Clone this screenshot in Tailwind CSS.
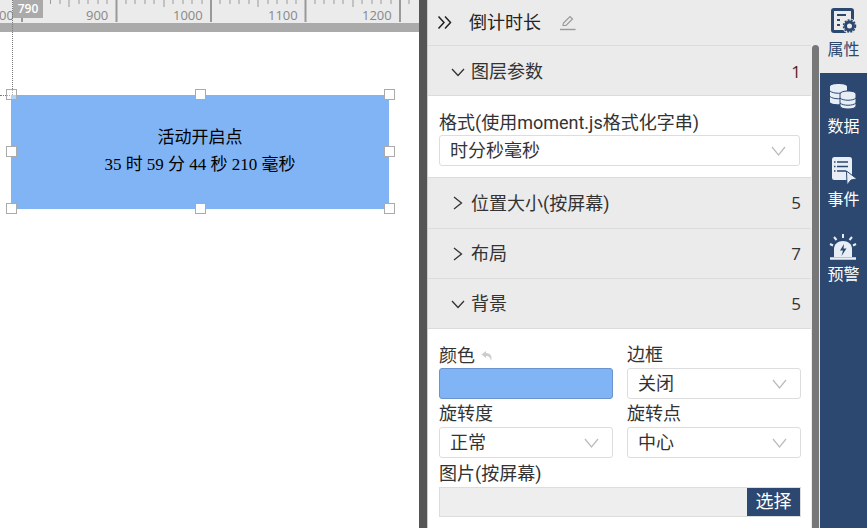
<!DOCTYPE html>
<html lang="zh"><head><meta charset="utf-8">
<script src="https://cdn.jsdelivr.net/npm/@tailwindcss/browser@4"></script>
</head>
<body class="m-0 overflow-hidden">
<div class="flex w-[867px] h-[528px] overflow-hidden bg-white text-[#333] font-['Roboto','Noto_Sans_CJK_SC',sans-serif]">
  <!-- canvas -->
  <div class="relative w-[419px] h-full bg-white shrink-0 overflow-hidden font-['Open_Sans','Noto_Sans_CJK_SC',sans-serif]">
    <div class="relative h-[23px] bg-[#ebebeb] overflow-hidden">
      <svg class="absolute left-0 top-0" width="419" height="23" stroke="#999" stroke-width="1">
        <g stroke-width="2"><path d="M22 0V22M116.500 0V22M211 0V22M305.500 0V22M400 0V22"/></g>
        <path d="M31.500 0V4M41 0V4M50.500 0V4M60 0V4M69 0V7M79 0V4M88 0V4M98 0V4M107 0V4M126 0V4M135 0V4M145 0V4M154 0V4M164 0V7M173 0V4M183 0V4M192 0V4M202 0V4M220 0V4M230 0V4M239 0V4M249 0V4M258 0V7M268 0V4M277 0V4M287 0V4M296 0V4M315 0V4M324 0V4M334 0V4M343 0V4M353 0V7M362 0V4M372 0V4M381 0V4M391 0V4M409 0V4"/>
      </svg>
      <span class="absolute right-[405px] top-[7px] text-[13px] leading-[16px] text-[#888]">800</span>
      <span class="absolute left-[86px] top-[7px] text-[13px] leading-[16px] text-[#888]">900</span>
      <span class="absolute left-[173px] top-[7px] text-[13px] leading-[16px] text-[#888]">1000</span>
      <span class="absolute left-[268px] top-[7px] text-[13px] leading-[16px] text-[#888]">1100</span>
      <span class="absolute left-[362px] top-[7px] text-[13px] leading-[16px] text-[#888]">1200</span>
      <span class="absolute left-[13px] top-0 w-[30px] h-[18px] bg-[#aaa] text-white text-[12px] leading-[17px] text-center font-semibold">790</span>
    </div>
    <div class="h-[9px] bg-[#aaa]"></div>
    <!-- guides -->
    <div class="absolute left-[12px] top-0 h-[95px] border-l border-dotted border-[#777]"></div>
    <div class="absolute left-0 top-[95px] w-[10px] border-t border-dotted border-[#777]"></div>
    <!-- widget -->
    <div class="absolute left-[11px] top-[95px] w-[378px] h-[114px] bg-[#80b4f5] flex flex-col items-center justify-center pb-[2px] text-black text-[17px] leading-[27px] font-['Liberation_Serif','Noto_Sans_CJK_SC',serif]">
      <div>活动开启点</div>
      <div>35 时 59 分 44 秒 210 毫秒</div>
    </div>
    <div class="absolute left-[6px] top-[89px] w-[11px] h-[11px] bg-white/40 border border-[#aaa]"></div>
    <div class="absolute left-[195px] top-[89px] w-[11px] h-[11px] bg-white border border-[#aaa]"></div>
    <div class="absolute left-[384px] top-[89px] w-[11px] h-[11px] bg-white border border-[#aaa]"></div>
    <div class="absolute left-[6px] top-[146px] w-[11px] h-[11px] bg-white border border-[#aaa]"></div>
    <div class="absolute left-[384px] top-[146px] w-[11px] h-[11px] bg-white border border-[#aaa]"></div>
    <div class="absolute left-[6px] top-[203px] w-[11px] h-[11px] bg-white border border-[#aaa]"></div>
    <div class="absolute left-[195px] top-[203px] w-[11px] h-[11px] bg-white border border-[#aaa]"></div>
    <div class="absolute left-[384px] top-[203px] w-[11px] h-[11px] bg-white border border-[#aaa]"></div>
  </div>
  <div class="w-[8px] h-full bg-[#555] shrink-0"></div>
  <!-- panel -->
  <div class="w-[393px] h-full shrink-0 bg-[#ebebeb] flex flex-col border-l border-[#ccc]">
    <div class="h-[45px] flex items-center shrink-0">
      <svg class="ml-[9px]" width="15" height="15" viewBox="0 0 15 15" fill="none" stroke="#222" stroke-width="1.500"><path d="M1.500 1.500L7 7.500L1.500 13.500M8 1.500L13.500 7.500L8 13.500"/></svg>
      <span class="ml-[17px] text-[18px] leading-[24px] text-[#222]">倒计时长</span>
      <svg class="ml-[18px]" width="17" height="17" viewBox="0 0 17 17" fill="none" stroke="#999" stroke-width="1.200"><path d="M4 11.500L4.500 9L11 2.500L13.500 5L7 11.500Z"/><path d="M1 15.500H16.500" stroke-width="1.400"/></svg>
    </div>
    <div class="flex flex-1 min-h-0">
      <div class="w-[383px] flex flex-col shrink-0">
        <div class="h-[51px] flex items-center border-y border-[#dcdcdc] pl-[23px] pr-[10px] pt-[2px] shrink-0">
          <svg width="14" height="14" viewBox="0 0 14 14" fill="none" stroke="#333" stroke-width="1.300"><path d="M1 4L7 10.500L13 4"/></svg>
          <span class="ml-[6px] text-[18px] text-[#333]">图层参数</span>
          <span class="ml-auto font-['Open_Sans'] text-[17px] text-[#5a2020]">1</span>
        </div>
        <div class="h-[82px] bg-white border-b border-[#dcdcdc] px-[11px] pt-[15px] shrink-0">
          <div class="text-[18px] leading-[24px] text-[#333] whitespace-nowrap">格式(使用moment.js格式化字串)</div>
          <div class="h-[31px] border border-[#ddd] rounded-[3px] flex items-center pl-[10px] pr-[13px] text-[18px] text-[#333]">
            <span>时分秒毫秒</span>
            <svg class="ml-auto" width="15" height="10" viewBox="0 0 15 10" fill="none" stroke="#bbb" stroke-width="1.200"><path d="M1 1L7.500 9L14 1"/></svg>
          </div>
        </div>
        <div class="h-[51px] flex items-center border-b border-[#dcdcdc] pl-[24px] pr-[10px] shrink-0">
          <svg width="12" height="14" viewBox="0 0 12 14" fill="none" stroke="#333" stroke-width="1.300"><path d="M2 1L9.500 7L2 13"/></svg>
          <span class="ml-[7px] text-[18px] text-[#333]">位置大小(按屏幕)</span>
          <span class="ml-auto font-['Open_Sans'] text-[17px] text-[#333]">5</span>
        </div>
        <div class="h-[50px] flex items-center border-b border-[#dcdcdc] pl-[24px] pr-[10px] shrink-0">
          <svg width="12" height="14" viewBox="0 0 12 14" fill="none" stroke="#333" stroke-width="1.300"><path d="M2 1L9.500 7L2 13"/></svg>
          <span class="ml-[7px] text-[18px] text-[#333]">布局</span>
          <span class="ml-auto font-['Open_Sans'] text-[17px] text-[#333]">7</span>
        </div>
        <div class="h-[50px] flex items-center border-b border-[#dcdcdc] pl-[23px] pr-[10px] shrink-0">
          <svg width="14" height="14" viewBox="0 0 14 14" fill="none" stroke="#333" stroke-width="1.300"><path d="M1 4L7 10.500L13 4"/></svg>
          <span class="ml-[6px] text-[18px] text-[#333]">背景</span>
          <span class="ml-auto font-['Open_Sans'] text-[17px] text-[#333]">5</span>
        </div>
        <div class="flex-1 bg-white px-[11px] pt-[14px]">
          <div class="grid grid-cols-[174px_174px] gap-x-[14px]">
            <div>
              <div class="h-[25px] leading-[24px] text-[18px] flex items-center">颜色
                <svg class="ml-[6px]" width="12" height="12" viewBox="0 0 12 12" fill="#ccc"><path d="M5 1L0.500 4.500L5 8V6C8 6 9.500 7.500 10 11C11.500 7 10 3 5 3Z"/></svg>
              </div>
              <div class="h-[31px] bg-[#80b4f5] border border-[#6a94cc] rounded-[3px]"></div>
            </div>
            <div>
              <div class="h-[25px] leading-[24px] text-[18px]">边框</div>
              <div class="h-[31px] border border-[#ddd] rounded-[3px] flex items-center pl-[10px] pr-[13px] text-[18px]">
                <span>关闭</span>
                <svg class="ml-auto" width="15" height="10" viewBox="0 0 15 10" fill="none" stroke="#bbb" stroke-width="1.200"><path d="M1 1L7.500 9L14 1"/></svg>
              </div>
            </div>
            <div class="mt-[3px]">
              <div class="h-[25px] leading-[24px] text-[18px]">旋转度</div>
              <div class="h-[31px] border border-[#ddd] rounded-[3px] flex items-center pl-[10px] pr-[13px] text-[18px]">
                <span>正常</span>
                <svg class="ml-auto" width="15" height="10" viewBox="0 0 15 10" fill="none" stroke="#bbb" stroke-width="1.200"><path d="M1 1L7.500 9L14 1"/></svg>
              </div>
            </div>
            <div class="mt-[3px]">
              <div class="h-[25px] leading-[24px] text-[18px]">旋转点</div>
              <div class="h-[31px] border border-[#ddd] rounded-[3px] flex items-center pl-[10px] pr-[13px] text-[18px]">
                <span>中心</span>
                <svg class="ml-auto" width="15" height="10" viewBox="0 0 15 10" fill="none" stroke="#bbb" stroke-width="1.200"><path d="M1 1L7.500 9L14 1"/></svg>
              </div>
            </div>
          </div>
          <div class="mt-[4px] h-[25px] leading-[24px] text-[18px] whitespace-nowrap">图片(按屏幕)</div>
          <div class="h-[30px] w-[362px] flex bg-[#eee] border border-[#ddd]">
            <div class="flex-1"></div>
            <div class="w-[53px] ml-[1px] bg-[#2c4770] text-white text-[18px] leading-[28px] text-center">选择</div>
          </div>
        </div>
      </div>
      <div class="w-[9px] shrink-0 pl-[1px]">
        <div class="w-[7px] h-full bg-[#777] rounded-t-[4px]"></div>
      </div>
    </div>
  </div>
  <!-- nav -->
  <div class="w-[47px] h-full shrink-0 bg-[#2c4770] flex flex-col items-center text-white text-[16px] leading-[20px]">
    <div class="w-full h-[73px] bg-[#ebebeb] flex flex-col items-center pt-[8px] text-[#2c4770]">
      <svg width="26" height="26" viewBox="0 0 26 26" class="ml-[1px]">
        <rect x="1.500" y="1.500" width="20" height="22" rx="1.500" fill="none" stroke="#2c4770" stroke-width="3"/>
        <path d="M6 7H15M6 12H9M6 17H9" stroke="#2c4770" stroke-width="2.200"/>
        <circle cx="18.500" cy="18" r="7.500" fill="#ebebeb"/>
        <circle cx="18.500" cy="18" r="4" fill="none" stroke="#2c4770" stroke-width="3"/>
        <circle cx="18.500" cy="18" r="6" fill="none" stroke="#2c4770" stroke-width="1.500" stroke-dasharray="2 1.200"/>
      </svg>
      <span class="mt-[6px]">属性</span>
    </div>
    <div class="h-[74px] flex flex-col items-center pt-[9px]">
      <svg width="28" height="28" viewBox="0 0 28 28">
        <path d="M1 4.500C1 1 18 1 18 4.500V20C18 23 1 23 1 20Z" fill="#e8eef5"/>
        <path d="M1 9C4 12 15 12 18 9M1 14.500C4 17.500 15 17.500 18 14.500" fill="none" stroke="#2c4770" stroke-width="1"/>
        <path d="M11 12C11 8 27 8 27 12V24C27 28 11 28 11 24Z" fill="#e8eef5" stroke="#2c4770" stroke-width="1"/>
        <path d="M11 16C14 19 24 19 27 16M11 21C14 24 24 24 27 21" fill="none" stroke="#2c4770" stroke-width="1"/>
      </svg>
      <span class="mt-[7px]">数据</span>
    </div>
    <div class="h-[75px] flex flex-col items-center pt-[10px]">
      <svg width="28" height="28" viewBox="0 0 28 28" class="ml-[3px]">
        <rect x="1" y="0" width="20" height="23" rx="2.500" fill="#e8eef5"/>
        <path d="M6 5H17M6 9.500H17M6 14H15M3 5H4.500M3 9.500H4.500M3 14H4.500" stroke="#2c4770" stroke-width="1.300"/>
        <path d="M15.500 14L26 22L20 23L16 28Z" fill="#e8eef5" stroke="#2c4770" stroke-width="1"/>
      </svg>
      <span class="mt-[5px]">事件</span>
    </div>
    <div class="flex flex-col items-center pt-[11px]">
      <svg width="28" height="28" viewBox="0 0 28 28">
        <path d="M5 24V16C5 11 9 8 14 8C19 8 23 11 23 16V24Z" fill="#e8eef5"/>
        <path d="M1 25.500H27" stroke="#e8eef5" stroke-width="2.500"/>
        <path d="M15 11L11 17.500H14L12.500 23L17.500 15.500H14.500Z" fill="#2c4770"/>
        <path d="M14 1V5M5 4L7.500 7M23 4L20.500 7M1 11L4 12.500M27 11L24 12.500" stroke="#e8eef5" stroke-width="2"/>
      </svg>
      <span class="mt-[4px]">预警</span>
    </div>
  </div>
</div>
</body></html>
